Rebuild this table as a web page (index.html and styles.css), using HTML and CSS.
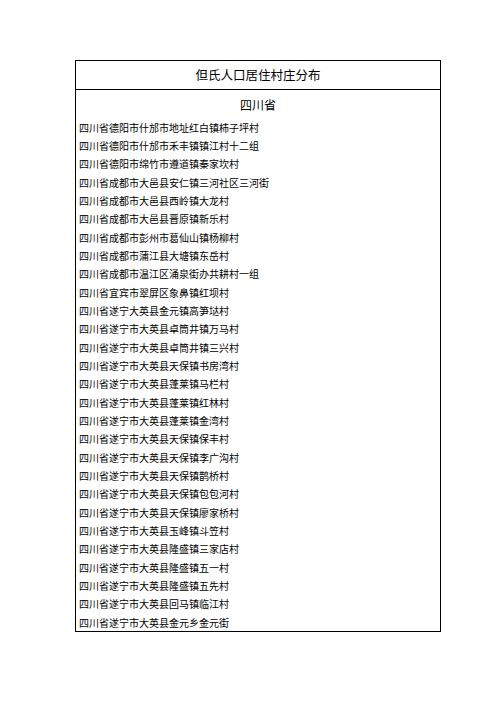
FILE: index.html
```html
<!DOCTYPE html>
<html lang="zh">
<head>
<meta charset="utf-8">
<title>但氏人口居住村庄分布</title>
<link rel="stylesheet" href="styles.css">
</head>
<body>
<div class="sheet">
  <div class="title">但氏人口居住村庄分布</div>
  <div class="province">四川省</div>
  <div class="list">
    <div class="row">四川省德阳市什邡市地址红白镇柿子坪村</div>
    <div class="row">四川省德阳市什邡市禾丰镇镇江村十二组</div>
    <div class="row">四川省德阳市绵竹市遵道镇秦家坎村</div>
    <div class="row">四川省成都市大邑县安仁镇三河社区三河街</div>
    <div class="row">四川省成都市大邑县西岭镇大龙村</div>
    <div class="row">四川省成都市大邑县晋原镇新乐村</div>
    <div class="row">四川省成都市彭州市葛仙山镇杨柳村</div>
    <div class="row">四川省成都市蒲江县大塘镇东岳村</div>
    <div class="row">四川省成都市温江区涌泉街办共耕村一组</div>
    <div class="row">四川省宜宾市翠屏区象鼻镇红坝村</div>
    <div class="row">四川省遂宁大英县金元镇高笋垯村</div>
    <div class="row">四川省遂宁市大英县卓筒井镇万马村</div>
    <div class="row">四川省遂宁市大英县卓筒井镇三兴村</div>
    <div class="row">四川省遂宁市大英县天保镇书房湾村</div>
    <div class="row">四川省遂宁市大英县蓬莱镇马栏村</div>
    <div class="row">四川省遂宁市大英县蓬莱镇红林村</div>
    <div class="row">四川省遂宁市大英县蓬莱镇金湾村</div>
    <div class="row">四川省遂宁市大英县天保镇保丰村</div>
    <div class="row">四川省遂宁市大英县天保镇李广沟村</div>
    <div class="row">四川省遂宁市大英县天保镇鹊桥村</div>
    <div class="row">四川省遂宁市大英县天保镇包包河村</div>
    <div class="row">四川省遂宁市大英县天保镇廖家桥村</div>
    <div class="row">四川省遂宁市大英县玉峰镇斗笠村</div>
    <div class="row">四川省遂宁市大英县隆盛镇三家店村</div>
    <div class="row">四川省遂宁市大英县隆盛镇五一村</div>
    <div class="row">四川省遂宁市大英县隆盛镇五先村</div>
    <div class="row">四川省遂宁市大英县回马镇临江村</div>
    <div class="row">四川省遂宁市大英县金元乡金元街</div>
  </div>
</div>
</body>
</html>
```

FILE: styles.css
```css
html, body {
  margin: 0;
  padding: 0;
  background: #ffffff;
}

body {
  font-family: "Noto Sans CJK SC", "Noto Sans", sans-serif;
  color: #000000;
  padding-top: 60px;
  padding-left: 75px;
}

.sheet {
  width: 366px;
  box-sizing: border-box;
  border: 1px solid #000000;
  display: flex;
  flex-direction: column;
}

.title {
  height: 29px;
  border-bottom: 1px solid #000000;
  display: flex;
  align-items: center;
  justify-content: center;
  font-size: 12.5px;
  padding-bottom: 1px;
  box-sizing: border-box;
}

.province {
  height: 28px;
  display: flex;
  align-items: center;
  justify-content: center;
  font-size: 12px;
}

.list {
  display: flex;
  flex-direction: column;
}

.row {
  height: 18.33px;
  display: flex;
  align-items: center;
  padding-left: 3px;
  font-size: 10px;
  white-space: nowrap;
}
```
